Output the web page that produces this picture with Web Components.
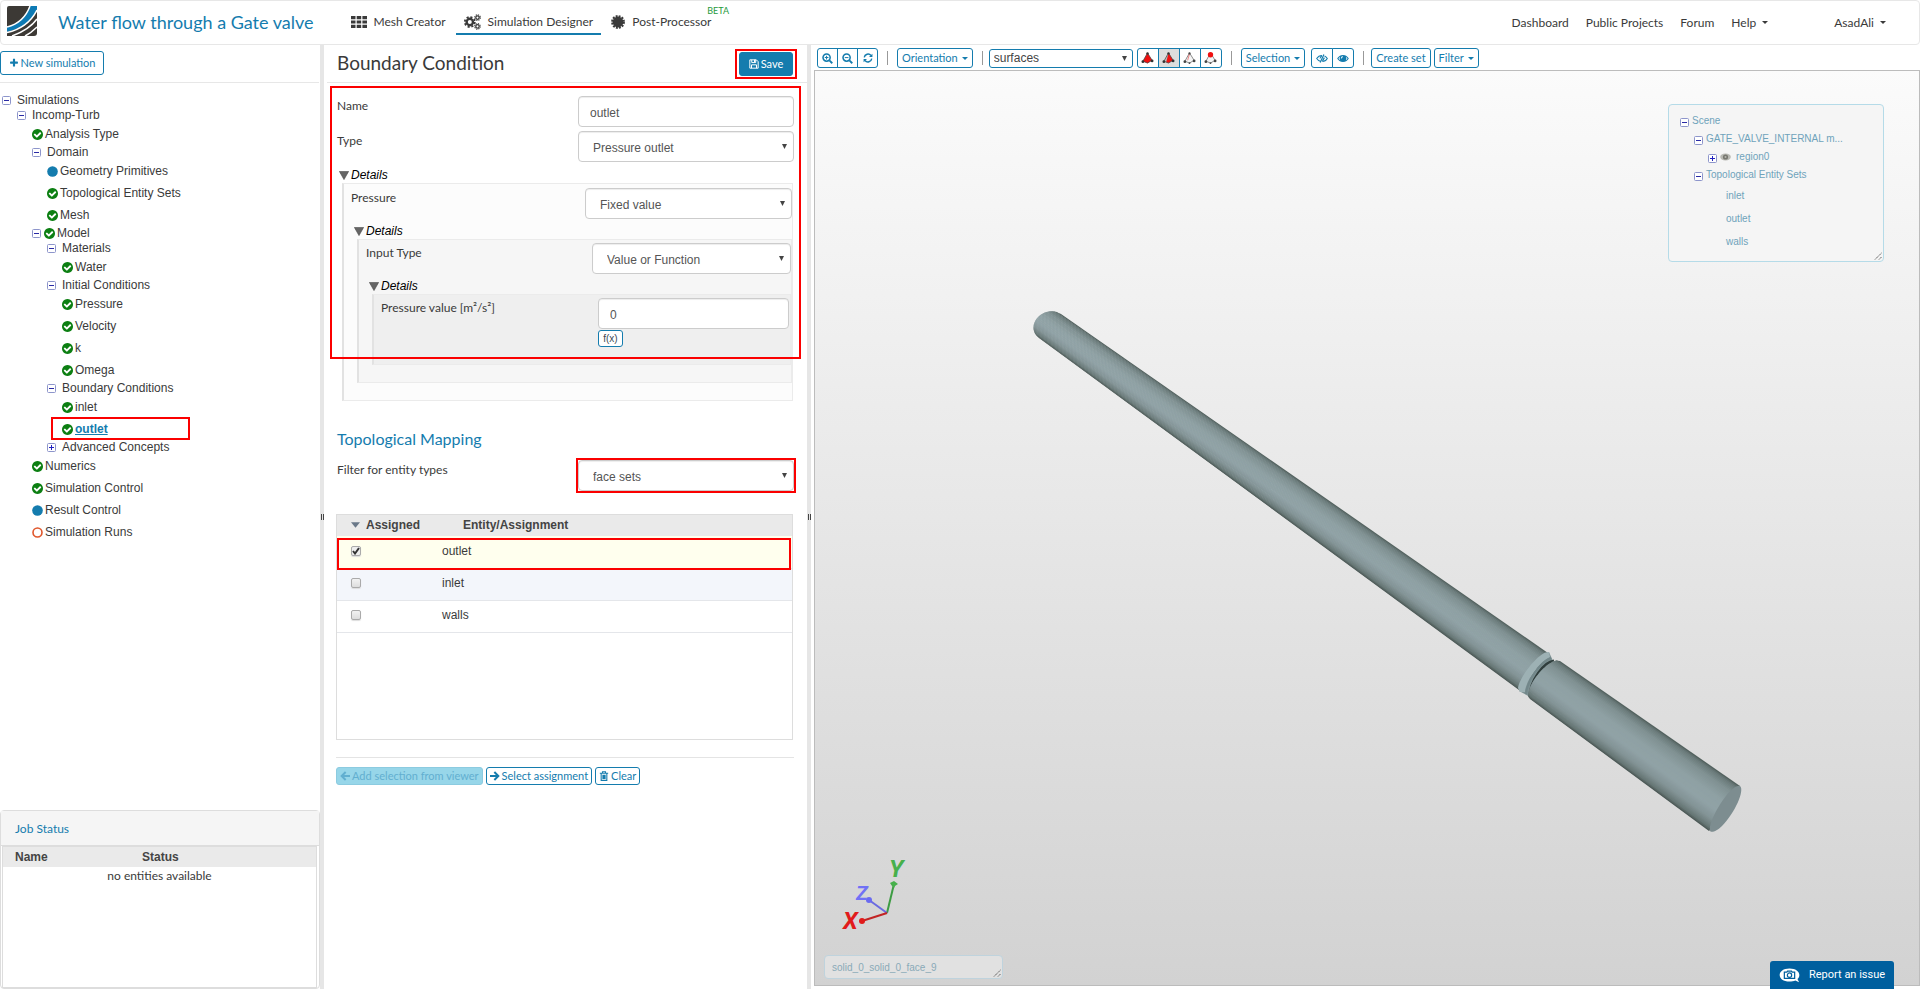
<!DOCTYPE html>
<html lang="en">
<head>
<meta charset="utf-8">
<title>Water flow through a Gate valve</title>
<style>
html,body{margin:0;height:100%}
body{font:12px/16px Lato,"Liberation Sans",sans-serif;color:#3a3a3a;background:#fff;
--blue:#147cae;--line:#e7e7e7;--red:#fb0000;--arial:"Liberation Sans",Arial,sans-serif}
</style>
</head>
<body>
<sim-app></sim-app>
<script>
const ICONS={
plus:['0 0 1792 1792','<path d="M1600 736v192q0 40-28 68t-68 28h-416v416q0 40-28 68t-68 28h-192q-40 0-68-28t-28-68v-416h-416q-40 0-68-28t-28-68v-192q0-40 28-68t68-28h416v-416q0-40 28-68t68-28h192q40 0 68 28t28 68v416h416q40 0 68 28t28 68z"/>'],
check:['128 128 1536 1536','<path fill="#0c7f12" d="M1412 734q0-28-18-46l-91-90q-19-19-45-19t-45 19l-408 407-226-226q-19-19-45-19t-45 19l-91 90q-18 18-18 46 0 27 18 45l362 362q19 19 45 19 27 0 46-19l543-543q18-18 18-45zm252 162q0 209-103 385.5t-279.5 279.5-385.5 103-385.5-103-279.5-279.5-103-385.5 103-385.5 279.5-279.5 385.5-103 385.5 103 279.5 279.5 103 385.5z"/>'],
dot:['0 0 11 11','<circle cx="5.500" cy="5.500" r="5.300" fill="#147cae"/>'],
ring:['0 0 11 11','<circle cx="5.500" cy="5.500" r="4.500" fill="none" stroke="#e0562b" stroke-width="1.600"/>'],
grid:['0 0 16 12','<path d="M0 0h4.500v3.200H0zM5.700 0h4.500v3.200H5.700zM11.400 0H16v3.200h-4.600zM0 4.400h4.500v3.200H0zM5.700 4.400h4.500v3.200H5.700zM11.400 4.400H16v3.200h-4.600zM0 8.800h4.500V12H0zM5.700 8.800h4.500V12H5.700zM11.400 8.800H16V12h-4.600z"/>'],
gears:['0 0 17 16','<g fill="none" stroke="currentColor"><circle cx="5.800" cy="8" r="3.200" stroke-width="2.400"/><circle cx="5.800" cy="8" r="5" stroke-width="1.800" stroke-dasharray="2.100 1.827"/><circle cx="13.500" cy="3.600" r="1.700" stroke-width="1.300"/><circle cx="13.500" cy="3.600" r="2.800" stroke-width="1.100" stroke-dasharray="1.200 1"/><circle cx="13.500" cy="12.400" r="1.700" stroke-width="1.300"/><circle cx="13.500" cy="12.400" r="2.800" stroke-width="1.100" stroke-dasharray="1.200 1"/></g>'],
burst:['0 0 14 14','<circle cx="7" cy="7" r="5.400"/><circle cx="7" cy="7" r="5.900" fill="none" stroke="currentColor" stroke-width="2" stroke-dasharray="1.900 1.189"/>'],
save:['0 0 12 12','<path fill="none" stroke="currentColor" stroke-width="1.200" d="M1 1h7.800L11 3.200V11H1zM3.300 1v3.300h4.800V1M3 11V7h6v4"/><path d="M6 1h1.500v2.700H6z"/>'],
left:['0 0 12 12','<path fill="none" stroke="currentColor" stroke-width="2.400" d="M6.800 1.200L2 6l4.800 4.800M2.400 6H12"/>'],
right:['0 0 12 12','<path fill="none" stroke="currentColor" stroke-width="2.400" d="M5.200 1.200L10 6l-4.800 4.800M9.600 6H0"/>'],
trash:['0 0 12 12','<path fill="none" stroke="currentColor" stroke-width="1.300" d="M2.600 3v8.200h6.800V3M1 2.700h10M4.200 2.500V.9h3.600v1.600M4.700 4.500v5.200M6 4.500v5.200M7.300 4.500v5.200"/>'],
zin:['0 0 12 12','<g fill="none" stroke="currentColor"><circle cx="5" cy="5" r="3.900" stroke-width="1.700"/><path stroke-width="2" d="M8 8l3.200 3.200"/><path stroke-width="1.100" d="M3 5h4M5 3v4"/></g>'],
zout:['0 0 12 12','<g fill="none" stroke="currentColor"><circle cx="5" cy="5" r="3.900" stroke-width="1.700"/><path stroke-width="2" d="M8 8l3.200 3.200"/><path stroke-width="1.100" d="M3 5h4"/></g>'],
refresh:['0 0 12 12','<path fill="none" stroke="currentColor" stroke-width="1.700" d="M1.500 5.200A4.600 4.600 0 0 1 9.600 3M10.500 6.800A4.600 4.600 0 0 1 2.400 9"/><path d="M11.300.8v4.100H7.200zM.7 11.200V7.100h4.100z"/>'],
eye:['0 0 14 10','<path fill-rule="evenodd" d="M7 .8C3.800.8 1.500 2.800.2 5 1.500 7.200 3.800 9.200 7 9.200S12.500 7.200 13.800 5C12.500 2.800 10.200.8 7 .8zM3.700 2.800a3.700 3.700 0 0 0 0 4.200A8 8 0 0 1 1.700 5c.5-.8 1.200-1.600 2-2.200zm6.600 0c.8.600 1.500 1.400 2 2.200a8 8 0 0 1-2 2 3.700 3.700 0 0 0 0-4.200zM7 2.400v1A1.500 1.500 0 0 0 5.500 5h-1A2.500 2.500 0 0 1 7 2.400z"/>'],
eyeslash:['0 0 14 10','<path fill="none" stroke="currentColor" stroke-width="1.200" d="M5.700 8.500C3.500 8 1.800 6.600.8 5 2 3 4.200 1.400 7 1.400M10 2.100C11.400 2.800 12.500 3.800 13.200 5 12 7 10 8.500 7.400 8.600M4.700 5A2.400 2.400 0 0 1 7 2.700"/><path fill="none" stroke="currentColor" stroke-width="1.400" d="M9.200.2L4.900 9.800M9.800 4L7.600 8"/>'],
geye:['0 0 14 10','<ellipse cx="7" cy="5" rx="6.800" ry="4.400" fill="#b9b9b3"/><circle cx="7" cy="5" r="3.300" fill="#77776f"/><circle cx="7" cy="5" r="1.300" fill="#b5b5ae"/>'],
minus:['0 0 9 9','<rect x=".5" y=".5" width="8" height="8" rx="1" fill="#fff" stroke="#8d95cb"/><path stroke="#2a2aa5" d="M2 4.500h5"/>'],
expand:['0 0 9 9','<rect x=".5" y=".5" width="8" height="8" rx="1" fill="#fff" stroke="#8d95cb"/><path stroke="#2020c0" d="M2 4.500h5M4.500 2v5"/>'],
tetra0:['0 0 14 13','<path fill="#f01010" d="M7 1L2 10l5 2.300L12 9z"/><path stroke="#444" fill="none" stroke-width=".8" d="M7 1L2 10l5 2 5-3z"/><g fill="#333"><circle cx="7" cy="1.500" r="1.300"/><circle cx="2" cy="10.500" r="1.500"/><circle cx="12" cy="9.700" r="1.500"/></g>'],
tetra1:['0 0 14 13','<path fill="#bbb" d="M7 1L2 10l5 2z"/><path fill="#f01010" d="M7 1L4.500 11 7 12l5-3z"/><path stroke="#444" fill="none" stroke-width=".8" d="M7 1L2 10l5 2 5-3z"/><g fill="#333"><circle cx="7" cy="1.500" r="1.300"/><circle cx="2" cy="10.500" r="1.500"/><circle cx="12" cy="9.700" r="1.500"/></g>'],
tetra2:['0 0 14 13','<path stroke="#777" fill="#f4f4f4" stroke-width=".9" d="M7 1L2 10l5 2 5-3z"/><path stroke="#f06060" d="M7 2L5 9" stroke-width=".8"/><g fill="#444"><circle cx="7" cy="1.500" r="1.200"/><circle cx="2" cy="10.500" r="1.500"/><circle cx="7" cy="12" r="1"/><circle cx="12" cy="9.700" r="1.500"/></g>'],
tetra3:['0 0 14 13','<path stroke="#777" fill="#f4f4f4" stroke-width=".9" d="M7 1L2 10l5 2 5-3z"/><g fill="#444"><circle cx="2" cy="10.500" r="1.500"/><circle cx="7" cy="12" r="1"/><circle cx="12" cy="9.700" r="1.500"/></g><circle cx="7" cy="3" r="2.900" fill="#f01010"/>'],
sort:['0 0 10 6','<path d="M0 0h10L5 6z"/>'],
tri:['0 0 10 9','<path fill="#666" stroke="#444" stroke-width=".6" d="M.4.400h9.200L5 8.600z"/>'],
caret:['0 0 6 3','<path d="M0 0h6L3 3z"/>'],
grip:['0 0 8 8','<path stroke="#555" stroke-dasharray="1.400 .6" fill="none" d="M1 7.500L7.500 1M5 7.500L7.500 5"/>'],
camera:['0 0 22 16','<path fill="#fff" d="M11 .5C4.500.5.500 3.600.500 7.500s4 7 10.500 7c2.300 0 4.500-.3 6.200-1.100l4 1.900-1.700-3.500c1.300-1.200 2-2.600 2-4.300C21.500 3.600 17.500.5 11 .5z"/><path fill="none" stroke="#005f9e" stroke-width="1.300" d="M5.500 4.300h2.700l.7-1h4.200l.7 1h2.700v6.800h-11z"/><circle cx="11" cy="7.600" r="2.300" fill="none" stroke="#005f9e" stroke-width="1.300"/>'],
logo:['0 0 30 30','<defs><clipPath id="c"><path d="M2 0h28v27a3 3 0 0 1-3 3H0V2a2 2 0 0 1 2-2z"/></clipPath></defs><g clip-path="url(#c)"><path fill="#3c3935" d="M0 0h30v30H0z"/><path fill="#0d7ab4" d="M23 0h7v4c-5 10-14 18-30 22v-5C12 18 19 11 23 0z"/><path fill="none" stroke="#fff" stroke-width="1.500" d="M23 0C19 11 12 18 0 21M30 4C25 14 15 23 0 26.500M30 13C25 20 16 26 5 30M30 21c-4 4-8 7-12 9"/></g>']};
const icon=(n,w,h=w)=>`<svg class="i i-${n}" aria-hidden="true" width="${w}" height="${h}" viewBox="${ICONS[n][0]}" fill="currentColor">${ICONS[n][1]}</svg>`;

const BASE=`<style>
*,*::after{box-sizing:border-box}:host{display:block}
a{color:inherit;text-decoration:none}svg{display:block;flex:none}
button,input,select{font:inherit;color:inherit;margin:0}
.btn{display:inline-flex;align-items:center;justify-content:center;gap:2px;background:#fff;color:var(--blue);border:1px solid var(--blue);border-radius:3px;padding:0;white-space:nowrap;font-size:11px}
</style>`;
const define=(name,html)=>customElements.define(name,class extends HTMLElement{
 constructor(){super();this.attachShadow({mode:'open'})}
 connectedCallback(){this.shadowRoot.innerHTML=BASE+(typeof html==='function'?html(this):html)}
});

define('app-header',`<style>
:host{border:1px solid var(--line);border-radius:4px;height:45px;background:#fff}
header{display:flex;align-items:center;height:100%;padding:0 33px 10px 6px;color:#3a3a3a}
.logo{padding-top:6px}h1{margin:0 0 0 21px;font-size:18px;line-height:24px;font-weight:400;color:var(--blue);padding-top:8px}
nav{display:flex;padding-top:8px}
.tabs{margin-left:29px}.tabs a{display:flex;align-items:center;gap:7px;padding:5px 8px 3px;height:26px;border-bottom:2px solid transparent;position:relative}
.tabs a:first-child{margin-right:2px}.tabs a:last-child{margin-left:2px}
.tabs a.on{border-color:var(--blue)}
sup{position:absolute;left:104px;top:-4px;font-size:9px;line-height:11px;color:#1f9a3c}
.links{margin-left:auto;gap:17px;padding-top:10px}.links a{display:flex;align-items:center;gap:6px}.links a:last-child{margin-left:49px}
</style>
<header><a class="logo" href="#" aria-label="Home">${icon('logo',30)}</a><h1>Water flow through a Gate valve</h1>
<nav class="tabs"><a href="#mesh">${icon('grid',16,12)}Mesh Creator</a><a class="on" href="#sim">${icon('gears',17,16)}Simulation Designer</a><a href="#post">${icon('burst',14)}Post-Processor<sup>BETA</sup></a></nav>
<nav class="links"><a href="#d">Dashboard</a><a href="#p">Public Projects</a><a href="#f">Forum</a><a href="#h">Help ${icon('caret',6,3)}</a><a href="#u">AsadAli ${icon('caret',6,3)}</a></nav></header>`);

const TREE=[[0,'-','','Simulations'],[1,'-','','Incomp-Turb'],[2,'','check','Analysis Type'],[2,'-','','Domain'],[3,'','dot','Geometry Primitives'],[3,'','check','Topological Entity Sets'],[3,'','check','Mesh'],[2,'-','check','Model'],[3,'-','','Materials'],[4,'','check','Water'],[3,'-','','Initial Conditions'],[4,'','check','Pressure'],[4,'','check','Velocity'],[4,'','check','k'],[4,'','check','Omega'],[3,'-','','Boundary Conditions'],[4,'','check','inlet'],[4,'','check','outlet',1],[3,'+','','Advanced Concepts'],[2,'','check','Numerics'],[2,'','check','Simulation Control'],[2,'','dot','Result Control'],[2,'','ring','Simulation Runs']];
define('sim-tree',`<style>
ul{list-style:none;margin:0;padding:0;font:12px/15px var(--arial)}
li{display:flex;align-items:center;height:15px;padding-left:calc(var(--l)*15px + 2px);position:relative}
li.leaf{height:22px}button{border:0;background:none;padding:0;width:11px;margin-right:1px}
a{display:flex;align-items:center;gap:2px}button+a.plain{margin-left:3px}
.sel{font-weight:700;color:var(--blue);text-decoration:underline}
.mark::after{content:"";position:absolute;left:51px;top:-1px;width:139px;height:23px;border:2px solid var(--red);pointer-events:none}
</style><ul>${TREE.map(([l,t,ic,n,s])=>`<li class="${t?'':'leaf'} ${s?'mark':''}" style="--l:${l}">${t?`<button aria-label="Toggle ${n}">${icon(t==='-'?'minus':'expand',9)}</button>`:''}<a class="${ic?'':'plain'} ${s?'sel':''}" href="#">${ic?icon(ic,11):''}${n}</a></li>`).join('')}</ul>`);

define('job-status',`<style>
:host{height:179px;border:1px solid #ddd;border-radius:4px;display:flex;flex-direction:column;padding-right:2px}
h2{margin:0 -2px 0 0;height:35px;line-height:36px;padding-left:14px;background:#f5f5f5;border-bottom:1px solid #ddd;font-size:12px;font-weight:400;color:var(--blue)}
div{flex:1;border:1px solid #ddd;margin:0 0 0 1px}
table{border-collapse:collapse;width:100%;table-layout:fixed}
th{font:bold 12px/20px var(--arial);text-align:left;padding:0 0 0 12px;background:#eaeaea;color:#444}
th:first-child{width:127px}td{text-align:center;padding:1px 0;line-height:16px}
</style><h2>Job Status</h2><div><table><thead><tr><th>Name</th><th>Status</th></tr></thead><tbody><tr><td colspan="2">no entities available</td></tr></tbody></table></div>`);

define('side-bar',`<style>
:host{display:flex;flex-direction:column;min-height:0}
.top{height:38px;padding-top:6px;border-bottom:1px solid var(--line);margin-right:1px}
.btn{height:24px;width:104px}
sim-tree{flex:1;padding-top:10px}
</style><div class="top"><button class="btn">${icon('plus',10)}New simulation</button></div><sim-tree></sim-tree><job-status></job-status>`);

const ARROW="url(\"data:image/svg+xml,%3Csvg xmlns='http://www.w3.org/2000/svg' width='5' height='5'%3E%3Cpath d='M0 0h5L2.500 5z' fill='%23444'/%3E%3C/svg%3E\")";
define('form-field',e=>{const k=e.getAttribute('kind'),v=e.getAttribute('value');return `<style>
:host{display:flex;justify-content:space-between}
label{padding-top:2px;line-height:16px;font-size:12px}
.c{width:var(--cw,216px)}
input,select{width:100%;height:31px;border:1px solid #ccc;border-radius:4px;background:#fff;box-shadow:inset 0 1px 1px rgba(0,0,0,.075);font:12px/16px var(--arial);color:#555;padding:3px 11px 0;display:block}
select{appearance:none;background:#fff ${ARROW} no-repeat right 6px center;padding:3px 14px 0}
:host([marked]) .c{outline:2px solid var(--red)}
</style><label for="f">${e.getAttribute('label')}</label><div class="c">${k==='select'?`<select id="f"><option>${v}</option></select>`:`<input id="f" value="${v}">`}<slot></slot></div>`});

define('detail-group',`<style>
.t{display:flex;align-items:center;gap:2px;border:0;background:none;padding:0;margin-left:2px;height:16px;font:italic 12px/16px var(--arial);color:#000}
.b{margin-left:5px;border:1px solid #ebebeb;border-left:2px solid #e2e2e2;background:var(--bg);padding:var(--p)}
</style><button class="t">${icon('tri',10,9)}Details</button><div class="b"><slot></slot></div>`);

define('entity-table',`<style>
:host{border:1px solid #ddd;height:226px;position:relative}
table{border-collapse:collapse;width:100%;table-layout:fixed;font:12px/16px var(--arial)}
th{background:#eaeaea;height:21px;text-align:left;padding:0 0 2px 14px;font-weight:700;color:#444}
th:first-child{width:112px}th span{display:flex;align-items:center;gap:6px}th svg{color:#6a7888}
td{height:32px;padding:0 0 2px 14px;border-bottom:1px solid #e4e6ea}
tr.a td{background:#ffffee}tr.b td{background:#f3f6fb}
input{appearance:none;display:block;width:10px;height:10px;border:1px solid #aaa;border-radius:2px;background:linear-gradient(#f2f2f2,#ddd);box-shadow:0 1px 1px #ddd}
input:checked{background:url("data:image/svg+xml,%3Csvg xmlns='http://www.w3.org/2000/svg' width='8' height='8'%3E%3Cpath d='M1 4L3 6.500 7 1' fill='none' stroke='%23333' stroke-width='2'/%3E%3C/svg%3E"),#eee}
label{display:block;margin-left:-21px}
.mark{position:absolute;left:0;right:1px;top:23px;height:32px;border:2px solid var(--red);pointer-events:none}
</style><table><thead><tr><th><span>${icon('sort',9,6)}Assigned</span></th><th>Entity/Assignment</th></tr></thead><tbody>
${['outlet','inlet','walls'].map((n,i)=>`<tr class="${'abc'[i]}"><td><input type="checkbox" id="e${i}"${i?'':' checked'}></td><td><label for="e${i}">${n}</label></td></tr>`).join('')}</tbody></table><div class="mark"></div>`);

define('boundary-form',`<style>
:host{overflow:hidden}
.head{display:flex;align-items:center;justify-content:space-between;height:38px;margin-left:3px;padding:0 13px 0 10px;border-bottom:1px solid var(--line)}
h2{font-size:19px;line-height:24px;font-weight:400;margin:0;padding-bottom:2px}
.ring{display:flex;outline:2px solid var(--red);outline-offset:1px;padding:0 1px}
.save{background:var(--blue);color:#fff;width:54px;height:24px}
.body{padding:0 13px;position:relative}
.frame{position:absolute;left:6px;right:6px;top:3px;height:273px;border:2px solid var(--red);pointer-events:none}
.f1{padding-top:13px}.f2{padding-top:4px;margin-bottom:5px}
detail-group{margin-right:1px}
.g1{--bg:#fcfcfc;--p:4px 0 17px 0;--cw:207px;margin-bottom:28px}
.g2{--bg:#f6f6f6;--p:3px 0 17px 0;--cw:199px}.g3{--bg:#efefef;--p:3px 0 17px 0;--cw:191px}
.g2,.g3{margin-left:8px;margin-right:0;padding-top:4px}
.g1>form-field,.g2>form-field{padding-left:7px}.g3>form-field{padding:0 1px 0 7px}
.fx{width:25px;height:17px;font:10px/14px var(--arial);color:#3d4a55;margin:1px 0 0;display:flex}
h3{font-size:16px;line-height:20px;font-weight:400;color:var(--blue);margin:0 0 11px}
entity-table{margin:23px 1px 0 -1px}
hr{border:0;border-top:1px solid #e4e4e4;margin:17px 0 9px -1px}
.acts{display:flex;gap:3px;margin-left:-1px}.acts .btn{height:18px;padding:0 3px}
.acts .btn:disabled{background:#97d6e9;border-color:#8ccbe0;color:#62afd0}
</style>
<div class="head"><h2>Boundary Condition</h2><div class="ring"><button class="btn save">${icon('save',10)}Save</button></div></div>
<div class="body"><form-field class="f1" label="Name" value="outlet"></form-field>
<form-field class="f2" kind="select" label="Type" value="Pressure outlet"></form-field>
<detail-group class="g1"><form-field kind="select" label="Pressure" value="Fixed value"></form-field>
<detail-group class="g2"><form-field kind="select" label="Input Type" value="Value or Function"></form-field>
<detail-group class="g3"><form-field label="Pressure value [m²/s²]" value="0"><button class="btn fx">f(x)</button></form-field></detail-group></detail-group></detail-group>
<div class="frame"></div>
<h3>Topological Mapping</h3>
<form-field kind="select" marked label="Filter for entity types" value="face sets"></form-field>
<entity-table></entity-table><hr>
<div class="acts"><button class="btn" disabled>${icon('left',10)}Add selection from viewer</button><button class="btn">${icon('right',10)}Select assignment</button><button class="btn">${icon('trash',10)}Clear</button></div></div>`);

define('viewer-toolbar',`<style>
:host{display:flex;align-items:center;height:25px;padding:1px 0 0 3px}
.btn{height:20px;padding:0 4px;gap:4px}.g{display:flex}.g .btn{padding:0;width:var(--w);border-radius:0;margin-left:-1px}
.g .btn:first-child{border-radius:3px 0 0 3px;margin-left:0}.g .btn:last-child{border-radius:0 3px 3px 0}
.g .on{background:#ddd}
i{width:1px;height:14px;background:#999;margin:0 9px}i+select{margin-left:-3px}i.n{margin-right:7px}
select{appearance:none;width:144px;height:19px;border:1px solid var(--blue);border-radius:3px;font:12px/16px var(--arial);color:#444;padding:0 4px;margin-right:4px;background:#fff ${ARROW} no-repeat right 5px center}
.sel{margin-right:6px}.set{margin-right:3px}
</style>
<div class="g" style="--w:21px"><button class="btn" aria-label="Zoom in">${icon('zin',11)}</button><button class="btn" aria-label="Zoom out">${icon('zout',11)}</button><button class="btn" aria-label="Refresh">${icon('refresh',10)}</button></div>
<i></i><button class="btn">Orientation ${icon('caret',6,3)}</button><i></i>
<select aria-label="Render mode"><option>surfaces</option></select>
<div class="g" style="--w:22px">${[0,1,2,3].map(n=>`<button class="btn ${n===1?'on':''}" aria-label="Pick mode ${n+1}">${icon('tetra'+n,13,12)}</button>`).join('')}</div>
<i></i><button class="btn sel">Selection ${icon('caret',6,3)}</button>
<div class="g" style="--w:22px"><button class="btn" aria-label="Hide">${icon('eyeslash',12,9)}</button><button class="btn" aria-label="Show">${icon('eye',12,9)}</button></div>
<i class="n"></i><button class="btn set">Create set</button><button class="btn">Filter ${icon('caret',6,3)}</button>`);

const SCENE=[[0,'minus','Scene'],[1,'minus','GATE_VALVE_INTERNAL m...'],[2,'expand','region0',1],[1,'minus','Topological Entity Sets'],[3,'','inlet'],[3,'','outlet'],[3,'','walls']];
define('scene-tree',`<style>
:host{background:#f5f5f5;border:1px solid #b5dbe8;border-radius:4px;padding:7px 11px;width:216px;height:158px}
ul{list-style:none;margin:0;padding:0;font:10px/18px var(--arial);color:#6fa3bb}
li{display:flex;align-items:center;gap:3px;height:18px;padding-left:calc(var(--l)*14px)}
li.leaf{height:23px;padding-left:46px}button{border:0;background:none;padding:2px 0 0}a{display:flex;align-items:center;gap:5px}
.i-grip{position:absolute;right:1px;bottom:1px}
</style><ul>${SCENE.map(([l,t,n,e])=>`<li class="${t?'':'leaf'}" style="--l:${l}">${t?`<button aria-label="Toggle ${n}">${icon(t,9)}</button>`:''}<a href="#">${e?icon('geye',11,8):''}${n}</a></li>`).join('')}</ul>${icon('grip',8)}`);

/* Shaded bands run between the upper and lower silhouette; dome bulges the near end of the tube. */
const shade=t=>{const s=[[0,[76,90,87]],[.05,[105,121,120]],[.18,[128,145,146]],[.4,[143,161,164]],[.62,[144,162,166]],[.8,[130,147,149]],[.94,[103,118,117]],[1,[70,83,80]]];
 let i=1;while(s[i][0]<t&&i<s.length-1)i++;const a=s[i-1],b=s[i],f=(t-a[0])/(b[0]-a[0]);return`rgb(${a[1].map((v,k)=>Math.round(v+(b[1][k]-v)*f))})`};
const tube=(a,b,c,d,dome)=>{let o='';const N=40,m=(p,q,t)=>[p[0]+(q[0]-p[0])*t,p[1]+(q[1]-p[1])*t];
 const near=t=>{const p=m(a,d,t),h=dome*Math.sqrt(Math.max(0,1-(2*t-1)**2));return[p[0]-.82*h,p[1]-.57*h]};
 for(let i=0;i<N;i++){const t=i/N,u=Math.min(1,(i+1.6)/N);o+=`<polygon fill="${shade((i+.5)/N)}" points="${[near(t),m(b,c,t),m(b,c,u),near(u)].map(p=>p.map(v=>v.toFixed(1)).join()).join(' ')}"/>`}return o};
define('valve-model',`<style>:host{position:absolute;inset:0}svg{width:100%;height:100%}text{font:italic bold 24px Roboto,sans-serif}</style>
<svg viewBox="815 71 1104 914" role="img" aria-label="Gate valve model">
${tube([1061,314],[1548,653],[1519,690],[1039,338],15)}
<path fill="#7d9193" d="M1549 652L1553 661L1530 697L1519 691z"/>
<path fill="#9db1b4" d="M1549 652C1541 650 1520 675 1518 688L1520 692L1525 692C1526 680 1540 661 1550 657z"/>
<path fill="none" stroke="#72878a" stroke-width="2" d="M1551 658C1540 662 1527 681 1526 694"/>
<path fill="none" stroke="#303e3d" stroke-width="3" d="M1554 661C1544 662 1530 681 1530 697"/>
${tube([1560,661],[1740,786],[1709,831],[1530,699],9)}
<path fill="#7d8d90" d="M1740 786C1745 790 1735 813 1722 826C1716 832 1709 834 1710 829C1709 819 1731 783 1740 786z"/>
<g stroke-width="2" fill="none"><path stroke="#3d9c43" d="M887 913L894 884"/><path stroke="#6a6ae0" d="M887 913L869 900"/><path stroke="#c22525" d="M887 913L862 921"/></g>
<path fill="#47b04b" d="M894 881l4 3-3 2-1 2-2-2-2-3z"/><circle cx="869" cy="900" r="3" fill="#6a6af0"/><circle cx="862" cy="921" r="3" fill="#e11b1b"/>
<text x="889" y="877" fill="#47b04b">Y</text><text x="856" y="900" fill="#7171f5" style="font-size:20px">Z</text><text x="843" y="929" fill="#e11b1b">X</text></svg>`);

define('model-viewer-pane',`<style>
:host{display:flex;flex-direction:column;min-width:0;padding:0 0 3px 3px}
.canvas{flex:1;position:relative;border:1px solid #bcbcbc;background:linear-gradient(#fbfbfb,#d2d2d2)}
scene-tree{position:absolute;right:35px;top:33px}
.pick{position:absolute;left:9px;bottom:6px;width:179px;height:24px;background:#e1e1e1;border:1px solid #bfd3dd;border-radius:4px;font:10px/24px var(--arial);color:#8aaab8;padding-left:7px}
.pick svg{position:absolute;right:1px;bottom:1px}
.issue{position:absolute;right:25px;bottom:-4px;width:124px;height:28px;background:#005f9e;color:#fff;border:0;border-radius:3px 3px 0 0;font:11px/16px Roboto,sans-serif;display:flex;align-items:center;gap:9px;padding:0 0 0 9px;white-space:nowrap}
</style><viewer-toolbar></viewer-toolbar><div class="canvas"><valve-model></valve-model><scene-tree></scene-tree>
<div class="pick">solid_0_solid_0_face_9${icon('grip',8)}</div><button class="issue">${icon('camera',21,15)}Report an issue</button></div>`);

define('split-bar',`<style>:host{background:#e6e6e6;display:flex;justify-content:center;align-items:center;overflow:hidden}
span{width:3px;height:6px;border:solid #444;border-width:0 1px}</style><span></span>`);

define('sim-app',`<style>
:host{display:flex;flex-direction:column;min-height:100vh}
main{flex:1;display:grid;grid-template-columns:320px 4px 483px 4px minmax(0,1fr)}
</style><app-header></app-header><main><side-bar></side-bar><split-bar></split-bar><boundary-form></boundary-form><split-bar></split-bar><model-viewer-pane></model-viewer-pane></main>`);
</script>
</body>
</html>
